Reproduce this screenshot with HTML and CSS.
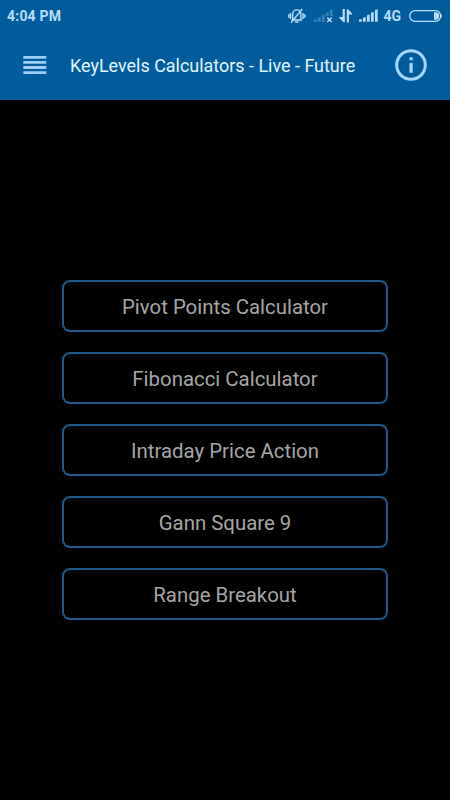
FILE: index.html
```
<!DOCTYPE html>
<html lang="en">
<head>
    <meta charset="UTF-8">
    <meta name="viewport" content="width=device-width, initial-scale=1.0">
    <title>KeyLevels Calculators</title>
    <link rel="stylesheet" href="styles.css">
</head>
<body>
    <header>
        <!-- Status Bar -->
        <div class="status-bar">
            <span class="time">4:04 PM</span>
            <svg class="bell" width="18" height="16" viewBox="0 0 18 16">
                <path d="M4.7 11.5V6a4.1 4.1 0 0 1 8.2 0v5.5M3.5 12h10.6M7 14h3.6M2.5 5v6M15.1 5v6M.9 6.2v3.6M16.8 6.2v3.6M3 14.8L14.3 1"/>
            </svg>
            <svg class="no-signal" width="20" height="14" viewBox="0 0 20 14">
                <path class="bars" d="M0 10.5L2.7 10v3H0zM4 8.7l2.7-.7v5H4zM8 6.2l2.7-.7V13H8zM12 3.7l2.7-.7v4H12zM16 1l2.7-.7V7H16z"/>
                <path class="cross" d="M13.2 8.5l4.5 4.5M17.7 8.5L13.2 13"/>
            </svg>
            <svg class="data" width="14" height="14" viewBox="0 0 14 14">
                <path d="M3.6 0h2.2v13.2H4.6L.3 8.9V8h3.3zM7.8 13.5V.3H9l4.2 4.3v.9H10v8z"/>
            </svg>
            <svg class="signal" width="19" height="13" viewBox="0 0 19 13">
                <path d="M0 10.5L2.7 10v2.7H0zM4 8.7L6.7 8v4.7H4zM8 6.2l2.7-.7v7.2H8zM12 3.7l2.7-.7v9.7H12zM16 1l2.7-.7v12.4H16z"/>
            </svg>
            <span class="network">4G</span>
            <svg class="battery" width="34" height="12" viewBox="0 0 34 12">
                <rect x=".7" y=".7" width="31" height="10.6" rx="5.3"/>
                <path class="level" d="M25 2.3h1.5a3.7 3.7 0 0 1 0 7.4H25z"/>
                <path class="level" d="M32 4a2.5 2.5 0 0 1 0 4z"/>
            </svg>
        </div>

        <!-- Title Bar -->
        <div class="title-bar">
            <svg class="menu" width="24" height="18" viewBox="0 0 24 18">
                <path d="M.3 0h23v2.8H.3zM.3 5h23v2.8H.3zM.3 10.1h23v2.8H.3zM.3 15.2h23V18H.3z"/>
            </svg>
            <h1>KeyLevels Calculators - Live - Future</h1>
            <svg class="info" width="32" height="32" viewBox="0 0 32 32">
                <circle cx="16" cy="16" r="14.3"/>
                <path d="M14.5 8.2h3.2v3.1h-3.2zM14.5 14h3.2v9.8h-3.2z"/>
            </svg>
        </div>
    </header>

    <main>
        <button>Pivot Points Calculator</button>
        <button>Fibonacci Calculator</button>
        <button>Intraday Price Action</button>
        <button>Gann Square 9</button>
        <button>Range Breakout</button>
    </main>
</body>
</html>
```
FILE: styles.css
```
body {
    font-family: Roboto, sans-serif;
    margin: 0;
    height: 800px;
    display: flex;
    flex-direction: column;
    background-color: #000;
}
header {
    height: 100px;
    background-color: #005c9d;
}
.status-bar {
    display: flex;
    align-items: center;
    height: 31px;
    padding: 0 7px;
    color: #b5defa;
    font-size: 14px;
    font-weight: bold;
}
.time {
    letter-spacing: 0.2px;
}
.status-bar svg {
    fill: #b5defa;
}
.status-bar .bell {
    margin-left: auto;
    margin-right: 8px;
    fill: none;
    stroke: #b5defa;
    stroke-width: 1.4;
}
.no-signal .bars {
    opacity: 0.3;
}
.no-signal .cross {
    stroke: #b5defa;
    stroke-width: 1.5;
}
.data {
    margin: 0 6px 0 5px;
}
.network {
    margin: 0 8px 0 5px;
}
.status-bar .battery {
    fill: none;
    stroke: #b5defa;
    stroke-width: 1.3;
}
.battery .level {
    fill: #b5defa;
    stroke: none;
}
.title-bar {
    display: flex;
    align-items: center;
    height: 68px;
    padding: 0 23px;
    box-sizing: border-box;
}
.title-bar .menu {
    fill: #9dcdf5;
    margin-right: 23px;
}
.title-bar h1 {
    margin: 0;
    padding-top: 1px;
    color: #e0f7ff;
    font-size: 17.95px;
    font-weight: normal;
    white-space: nowrap;
}
.title-bar .info {
    margin-left: auto;
    fill: none;
    stroke: #a5d6fb;
    stroke-width: 3;
}
.info path {
    fill: #a5d6fb;
    stroke: none;
}
main {
    flex: 1;
    display: flex;
    flex-direction: column;
    align-items: center;
    justify-content: center;
    gap: 20px;
}
button {
    width: 326px;
    height: 52px;
    padding: 2px 0 0;
    border: 2px solid #1e598b;
    border-radius: 8px;
    background-color: #000;
    color: #a6a6a6;
    font-family: inherit;
    font-size: 20.4px;
}
```
